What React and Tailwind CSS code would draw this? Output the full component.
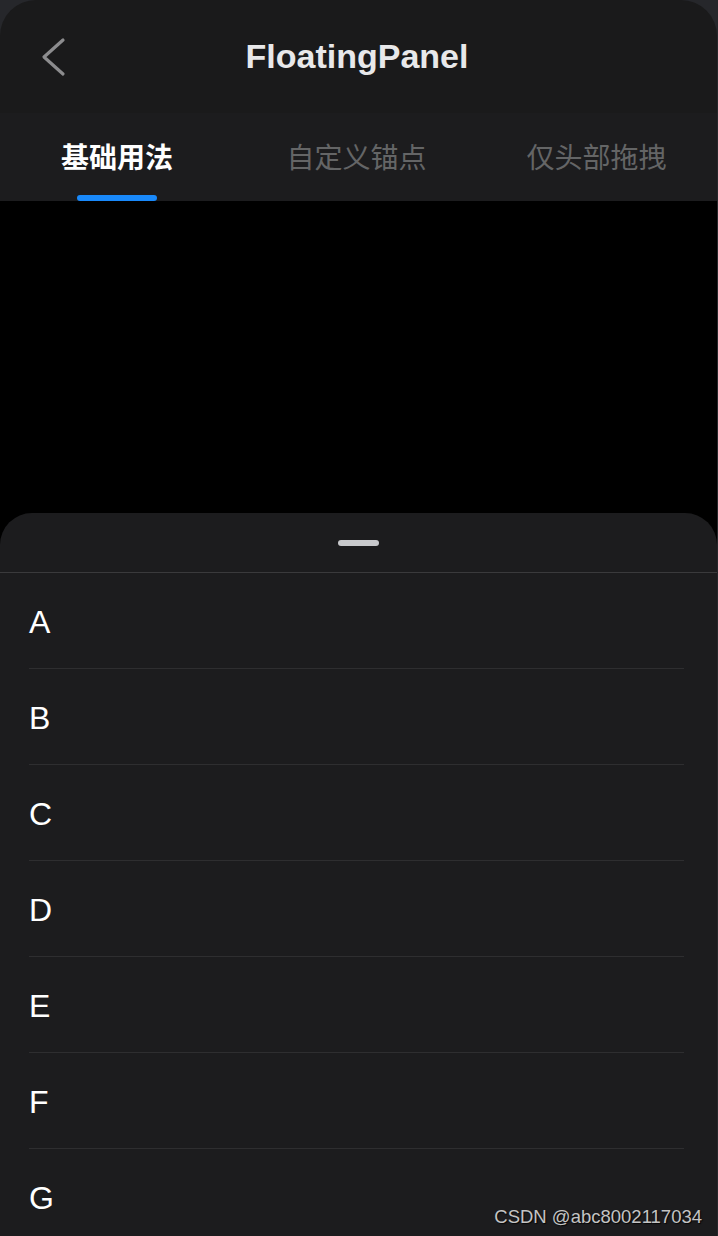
import React from "react";

const rows = ["A", "B", "C", "D", "E", "F", "G"];

export default function App() {
  return (
    <div className="h-[1236px] w-[718px] overflow-hidden bg-[#26272b] pr-[1px] relative" style={{ fontFamily: '"Liberation Sans", Arial, "Noto Sans CJK SC", sans-serif' }}>
      <div className="flex h-full flex-col overflow-hidden rounded-t-[36px] bg-[#1a1a1b]">
        {/* Nav bar */}
        <div className="relative flex h-[113px] shrink-0 items-center justify-center">
          <svg className="absolute left-[36px] top-[34px]" width="36" height="46" viewBox="0 0 36 46" fill="none">
            <path d="M27 6 L8 23 L27 40" stroke="#8c8c8e" strokeWidth="3.2" strokeLinecap="round" strokeLinejoin="round" />
          </svg>
          <span className="pr-[3px] text-[34px] font-bold text-[#e8e8ea]">FloatingPanel</span>
        </div>
        {/* Tabs */}
        <div className="flex h-[88px] shrink-0 bg-[#1c1c1e]" style={{ fontFamily: '"Noto Sans CJK SC", sans-serif' }}>
          <div className="relative flex flex-1 items-center justify-center pb-[2px]">
            <span className="mr-[5px] text-[28px] font-bold text-white">基础用法</span>
            <div className="absolute bottom-0 left-[77px] h-[6px] w-[80px] rounded-[3px] bg-[#1989fa]" />
          </div>
          <div className="flex flex-1 items-center justify-center pb-[2px]">
            <span className="mr-[4px] text-[28px] text-[#646566]">自定义锚点</span>
          </div>
          <div className="flex flex-1 items-center justify-center pb-[2px]">
            <span className="mr-[2px] text-[28px] text-[#646566]">仅头部拖拽</span>
          </div>
        </div>
        {/* Content */}
        <div className="h-[312px] shrink-0 bg-black" />
        {/* Floating panel */}
        <div className="flex flex-1 flex-col bg-black">
          <div className="flex flex-1 flex-col rounded-t-[32px] bg-[#1c1c1e]">
            <div className="flex h-[60px] shrink-0 items-start justify-center border-b border-[#3a3a3c] pt-[27px]">
              <div className="h-[6px] w-[41px] rounded-[3px] bg-[#c8c9cc]" />
            </div>
            <div className="flex flex-col">
              {rows.map((r) => (
                <div key={r} className="ml-[29px] mr-[33px] flex h-[96px] shrink-0 items-center border-b border-[#2e2e30] pt-[2px]">
                  <span className="text-[32px] text-white">{r}</span>
                </div>
              ))}
            </div>
          </div>
        </div>
      </div>
      <div className="absolute bottom-[5px] right-[16px] text-[18.5px] text-[#c4c4c4]" style={{ textShadow: "1px 1px 1px rgba(0,0,0,0.8)" }}>
        CSDN @abc8002117034
      </div>
    </div>
  );
}
